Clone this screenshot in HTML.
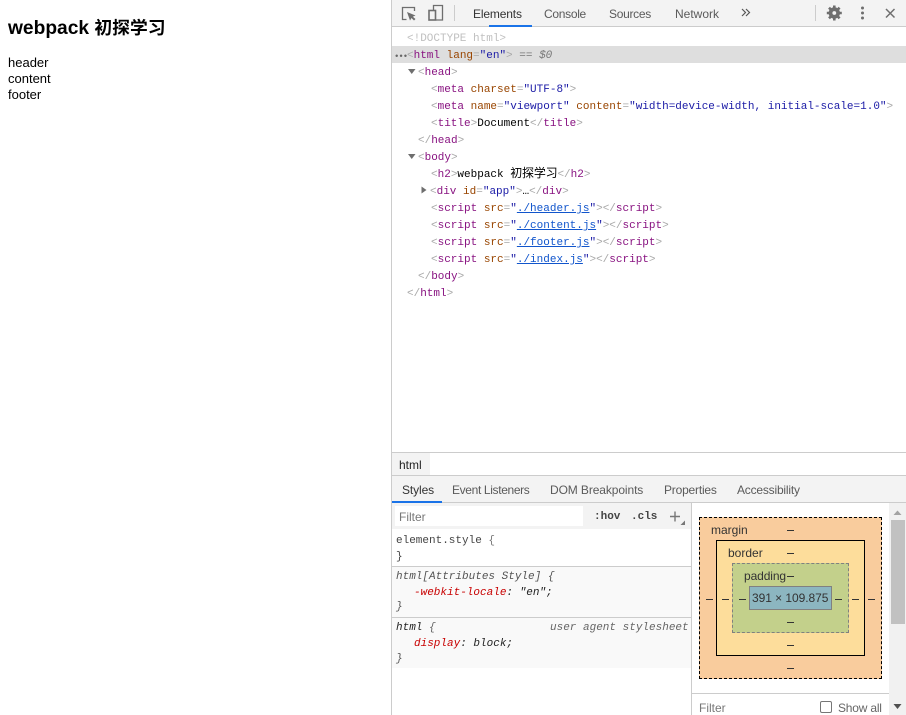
<!DOCTYPE html>
<html lang="en"><head><meta charset="UTF-8"><title>Document</title>
<style>
html,body{margin:0;padding:0;background:#fff;width:906px;height:715px;overflow:hidden}
body{position:relative;font-family:"Liberation Sans","Noto Sans CJK SC",sans-serif;color:#000}
.a{position:absolute;white-space:pre}
.b{position:absolute}
.l{position:absolute;white-space:pre;font:11px/17px "Liberation Mono","Noto Sans CJK SC",monospace;color:#a8a8a8;height:17px}
.t{color:#881280}.n{color:#994500}.v{color:#1a1aa6}.k{color:#000}.u{color:#1155cc;text-decoration:underline}
.tab{position:absolute;font-size:12px;line-height:16px;color:#5a5a5a;white-space:pre;letter-spacing:-.15px}
.m{position:absolute;white-space:pre;font:italic 11px/17px "Liberation Mono",monospace;color:#444}
.r{position:absolute;white-space:pre;font:11px/17px "Liberation Mono",monospace;color:#444}
.x{position:absolute;font-size:12px;line-height:14px;color:#333;white-space:pre}
.d{position:absolute;width:7px;height:1px;background:#333}
</style></head><body>
<div class="a" style="left:8px;top:18px;font-size:19.2px;line-height:22px;font-weight:700">webpack <span style="font-size:17.8px;line-height:0">初探学习</span></div>
<div class="a" style="left:8px;top:55px;font-size:13px;line-height:16px">header</div>
<div class="a" style="left:8px;top:71px;font-size:13px;line-height:16px">content</div>
<div class="a" style="left:8px;top:87px;font-size:13px;line-height:16px">footer</div>

<div class="b" style="left:391px;top:0;width:1px;height:715px;background:#ccc"></div>
<div class="b" style="left:392px;top:0;width:514px;height:26px;background:#f3f3f3"></div>
<div class="b" style="left:392px;top:26px;width:514px;height:1px;background:#ccc"></div>
<div class="b" style="left:489px;top:25px;width:43px;height:2px;background:#1a73e8"></div>
<div class="b" style="left:454px;top:5px;width:1px;height:16px;background:#ccc"></div>
<div class="b" style="left:815px;top:5px;width:1px;height:16px;background:#ccc"></div>
<svg class="b" style="left:392px;top:0" width="514" height="26" viewBox="0 0 514 26">
<path d="M14.500 19.500H10.500V7.500H22.500V11" fill="none" stroke="#6e6e6e" stroke-width="1.300"/>
<path d="M15 12L23.500 15.500L20.800 16.800L23.500 19L22 20.500L19.500 18L18 20.500Z" fill="#6e6e6e"/>
<path d="M41.500 10V5.500H50.500V20H44" fill="none" stroke="#6e6e6e" stroke-width="1.300"/>
<rect x="37" y="10.500" width="6.500" height="9.500" fill="none" stroke="#6e6e6e" stroke-width="1.600"/>
<circle cx="442.300" cy="13" r="3.800" fill="none" stroke="#6e6e6e" stroke-width="3.800"/>
<path d="M442.300 5.500V8M442.300 18V20.500M434.800 13H437.300M447.300 13H449.800M437 7.700L438.800 9.500M445.800 16.500L447.600 18.300M447.600 7.700L445.800 9.500M438.800 16.500L437 18.300" stroke="#6e6e6e" stroke-width="2.600"/>
<circle cx="470.500" cy="8" r="1.500" fill="#6e6e6e"/><circle cx="470.500" cy="13" r="1.500" fill="#6e6e6e"/><circle cx="470.500" cy="18" r="1.500" fill="#6e6e6e"/>
<path d="M494 9L502.500 17.500M502.500 9L494 17.500" stroke="#6e6e6e" stroke-width="1.500"/>
</svg>
<svg class="b" style="left:741px;top:8px" width="12" height="10" viewBox="0 0 12 10"><path d="M1 1L4.500 4.500 1 8M5 1L8.500 4.500 5 8" fill="none" stroke="#555" stroke-width="1.200"/></svg>
<div class="tab" style="left:473px;top:6px;color:#333">Elements</div>
<div class="tab" style="left:544px;top:6px;letter-spacing:-.3px">Console</div>
<div class="tab" style="left:609px;top:6px;letter-spacing:-.3px">Sources</div>
<div class="tab" style="left:675px;top:6px;letter-spacing:0">Network</div>

<div class="b" style="left:392px;top:46px;width:514px;height:17px;background:#dedede"></div>
<div class="l" style="left:407px;top:31px;color:#c0c0c0">&lt;!DOCTYPE html&gt;</div>
<div class="l" style="left:394px;top:49px;color:#666;font-size:9px;letter-spacing:-1px">•••</div>
<div class="l" style="left:407px;top:48px">&lt;<span class="t">html</span> <span class="n">lang</span>=<span class="v">"en"</span>&gt; <span style="color:#777">== <i>$0</i></span></div>
<div class="l" style="left:418px;top:65px">&lt;<span class="t">head</span>&gt;</div>
<div class="l" style="left:431px;top:82px">&lt;<span class="t">meta</span> <span class="n">charset</span>=<span class="v">"UTF-8"</span>&gt;</div>
<div class="l" style="left:431px;top:99px">&lt;<span class="t">meta</span> <span class="n">name</span>=<span class="v">"viewport"</span> <span class="n">content</span>=<span class="v">"width=device-width, initial-scale=1.0"</span>&gt;</div>
<div class="l" style="left:431px;top:116px">&lt;<span class="t">title</span>&gt;<span class="k">Document</span>&lt;/<span class="t">title</span>&gt;</div>
<div class="l" style="left:418px;top:133px">&lt;/<span class="t">head</span>&gt;</div>
<div class="l" style="left:418px;top:150px">&lt;<span class="t">body</span>&gt;</div>
<div class="l" style="left:431px;top:167px">&lt;<span class="t">h2</span>&gt;<span class="k">webpack </span><span class="k" style="font:12px/0 'Noto Sans CJK SC',sans-serif;letter-spacing:-.2px">初探学习</span>&lt;/<span class="t">h2</span>&gt;</div>
<div class="l" style="left:430px;top:184px">&lt;<span class="t">div</span> <span class="n">id</span>=<span class="v">"app"</span>&gt;<span class="k">…</span>&lt;/<span class="t">div</span>&gt;</div>
<div class="l" style="left:431px;top:201px">&lt;<span class="t">script</span> <span class="n">src</span>=<span class="v">"</span><span class="u">./header.js</span><span class="v">"</span>&gt;&lt;/<span class="t">script</span>&gt;</div>
<div class="l" style="left:431px;top:218px">&lt;<span class="t">script</span> <span class="n">src</span>=<span class="v">"</span><span class="u">./content.js</span><span class="v">"</span>&gt;&lt;/<span class="t">script</span>&gt;</div>
<div class="l" style="left:431px;top:235px">&lt;<span class="t">script</span> <span class="n">src</span>=<span class="v">"</span><span class="u">./footer.js</span><span class="v">"</span>&gt;&lt;/<span class="t">script</span>&gt;</div>
<div class="l" style="left:431px;top:252px">&lt;<span class="t">script</span> <span class="n">src</span>=<span class="v">"</span><span class="u">./index.js</span><span class="v">"</span>&gt;&lt;/<span class="t">script</span>&gt;</div>
<div class="l" style="left:418px;top:269px">&lt;/<span class="t">body</span>&gt;</div>
<div class="l" style="left:407px;top:286px">&lt;/<span class="t">html</span>&gt;</div>
<svg class="b" style="left:392px;top:60px" width="40" height="140" viewBox="0 0 40 140">
<path d="M16 9H23.500L19.750 14Z" fill="#6e6e6e"/>
<path d="M16 94H23.500L19.750 99Z" fill="#6e6e6e"/>
<path d="M29.500 126.500V133.500L34.500 130Z" fill="#6e6e6e"/>
</svg>

<div class="b" style="left:392px;top:452px;width:514px;height:1px;background:#ccc"></div>
<div class="b" style="left:392px;top:453px;width:38px;height:22px;background:#f3f3f3"></div>
<div class="a" style="left:399px;top:457px;font-size:12px;line-height:16px;color:#222">html</div>
<div class="b" style="left:392px;top:475px;width:514px;height:1px;background:#ccc"></div>
<div class="b" style="left:392px;top:476px;width:514px;height:26px;background:#f3f3f3"></div>
<div class="b" style="left:392px;top:502px;width:514px;height:1px;background:#ccc"></div>
<div class="b" style="left:392px;top:501px;width:50px;height:2px;background:#1a73e8"></div>
<div class="tab" style="left:402px;top:482px;color:#333;letter-spacing:-.1px">Styles</div>
<div class="tab" style="left:452px;top:482px;letter-spacing:-.35px">Event Listeners</div>
<div class="tab" style="left:550px;top:482px;letter-spacing:-.1px">DOM Breakpoints</div>
<div class="tab" style="left:664px;top:482px;letter-spacing:-.2px">Properties</div>
<div class="tab" style="left:737px;top:482px;letter-spacing:-.2px">Accessibility</div>

<div class="b" style="left:392px;top:503px;width:299px;height:26px;background:#f3f3f3"></div>
<div class="b" style="left:395px;top:506px;width:188px;height:20px;background:#fff"></div>
<div class="a" style="left:399px;top:509px;font-size:12px;line-height:16px;color:#777">Filter</div>
<div class="a" style="left:594px;top:509px;font:bold 11px/17px 'Liberation Mono',monospace;color:#444">:hov</div>
<div class="a" style="left:631px;top:509px;font:bold 11px/17px 'Liberation Mono',monospace;color:#444">.cls</div>
<svg class="b" style="left:668px;top:508px" width="20" height="20" viewBox="0 0 20 20"><path d="M2 8.500H12M7 3.500V13.500" stroke="#777" stroke-width="1.400"/><path d="M17 12.500V17H12.500Z" fill="#777"/></svg>

<div class="r" style="left:396px;top:533px">element.style <span style="color:#777">{</span></div>
<div class="r" style="left:396px;top:549px;color:#444">}</div>
<div class="b" style="left:392px;top:566px;width:299px;height:1px;background:#ccc"></div>
<div class="b" style="left:392px;top:567px;width:299px;height:50px;background:#f9f9f9"></div>
<div class="b" style="left:392px;top:617px;width:299px;height:1px;background:#ccc"></div>
<div class="b" style="left:392px;top:618px;width:299px;height:50px;background:#f9f9f9"></div>
<div class="m" style="left:396px;top:569px;color:#555">html[Attributes Style] {</div>
<div class="m" style="left:414px;top:585px;color:#222"><span style="color:#c80000">-webkit-locale</span>: "en";</div>
<div class="m" style="left:396px;top:599px;color:#555">}</div>
<div class="m" style="left:396px;top:620px;color:#222">html <span style="color:#666">{</span></div>
<div class="m" style="left:550px;top:620px;color:#666">user agent stylesheet</div>
<div class="m" style="left:414px;top:636px;color:#222"><span style="color:#c80000">display</span>: block;</div>
<div class="m" style="left:396px;top:651px;color:#555">}</div>

<div class="b" style="left:691px;top:503px;width:1px;height:212px;background:#ccc"></div>
<div class="b" style="left:889px;top:503px;width:17px;height:212px;background:#f1f1f1"></div>
<div class="b" style="left:891px;top:520px;width:14px;height:104px;background:#c1c1c1"></div>
<svg class="b" style="left:889px;top:503px" width="17" height="212" viewBox="0 0 17 212"><path d="M4.500 12L8.500 7.500 12.500 12Z" fill="#a3a3a3"/><path d="M4.500 201H12.500L8.500 206Z" fill="#505050"/></svg>

<div class="b" style="left:699px;top:517px;width:181px;height:160px;background:#f9cc9d;border:1px dashed #000"></div>
<div class="b" style="left:716px;top:540px;width:147px;height:114px;background:#fddd9b;border:1px solid #000"></div>
<div class="b" style="left:732px;top:563px;width:115px;height:68px;background:#c3d08b;border:1px dashed #808080"></div>
<div class="b" style="left:749px;top:586px;width:81px;height:22px;background:#8cb6c0;border:1px solid #808080"></div>
<div class="x" style="left:711px;top:523px">margin</div>
<div class="x" style="left:728px;top:546px">border</div>
<div class="x" style="left:744px;top:569px;letter-spacing:-.1px">padding</div>
<div class="x" style="left:752px;top:591px;letter-spacing:-.05px">391 × 109.875</div>
<div class="d" style="left:787px;top:530px"></div>
<div class="d" style="left:787px;top:553px"></div>
<div class="d" style="left:787px;top:576px"></div>
<div class="d" style="left:787px;top:622px"></div>
<div class="d" style="left:787px;top:645px"></div>
<div class="d" style="left:787px;top:668px"></div>
<div class="d" style="left:706px;top:599px"></div>
<div class="d" style="left:722px;top:599px"></div>
<div class="d" style="left:739px;top:599px"></div>
<div class="d" style="left:835px;top:599px"></div>
<div class="d" style="left:852px;top:599px"></div>
<div class="d" style="left:868px;top:599px"></div>

<div class="b" style="left:692px;top:693px;width:197px;height:1px;background:#ccc"></div>
<div class="a" style="left:699px;top:700px;font-size:12px;line-height:16px;color:#777">Filter</div>
<div class="b" style="left:820px;top:701px;width:10px;height:10px;border:1px solid #767676;border-radius:2px;background:#fff"></div>
<div class="a" style="left:838px;top:700px;font-size:12px;line-height:16px;color:#666;letter-spacing:-.2px">Show all</div>
</body></html>
